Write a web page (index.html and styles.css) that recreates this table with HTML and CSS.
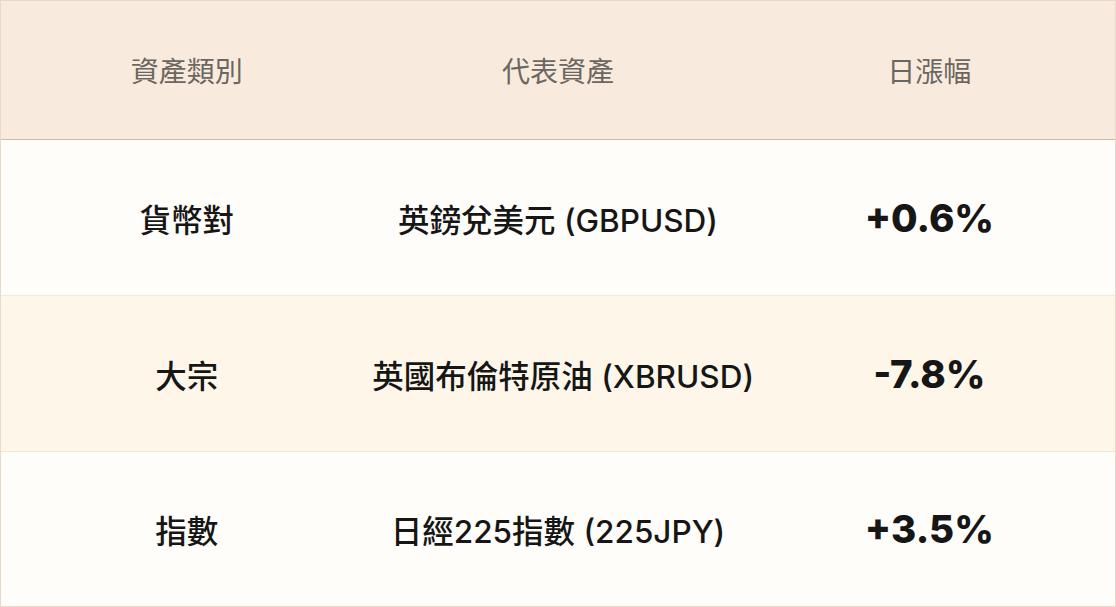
FILE: index.html
```html
<!DOCTYPE html>
<html lang="zh-Hant">
<head>
<meta charset="utf-8">
<link rel="stylesheet" href="styles.css">
</head>
<body>
<div class="table">
  <div class="row head">
    <div class="cell">資產類別</div>
    <div class="cell">代表資產</div>
    <div class="cell">日漲幅</div>
  </div>
  <div class="row r1">
    <div class="cell">貨幣對</div>
    <div class="cell">英鎊兌美元 (GBPUSD)</div>
    <div class="cell pct">+0.6%</div>
  </div>
  <div class="row r2">
    <div class="cell">大宗</div>
    <div class="cell">英國布倫特原油 (XBRUSD)</div>
    <div class="cell pct">-7.8%</div>
  </div>
  <div class="row r3">
    <div class="cell">指數</div>
    <div class="cell">日經225指數 (225JPY)</div>
    <div class="cell pct">+3.5%</div>
  </div>
</div>
</body>
</html>
```
FILE: styles.css
```css
html, body {
  margin: 0;
  padding: 0;
  background: #fffdf9;
}
.table {
  width: 1116px;
  height: 607px;
  box-sizing: border-box;
  border: 1px solid #e9d9c6;
  display: flex;
  flex-direction: column;
  font-family: Inter, "Noto Sans CJK TC", sans-serif;
}
.row {
  display: grid;
  grid-template-columns: repeat(3, minmax(0, 1fr));
  align-items: center;
  text-align: center;
  box-sizing: border-box;
}
.cell {
  white-space: nowrap;
  min-width: 0;
}
.head {
  height: 139px;
  background: #f8ebde;
  border-bottom: 1px solid #cdbcab;
  color: #6c6661;
  font-size: 28px;
  font-weight: 400;
}
.r1, .r2, .r3 {
  color: #161616;
  font-size: 31.5px;
  font-weight: 500;
}
.r1 {
  height: 156px;
  background: #fffdf9;
  border-bottom: 1px solid #f5e6d6;
}
.r2 {
  height: 156px;
  background: #fff6ea;
  border-bottom: 1px solid #f5e6d6;
}
.r3 {
  flex: 1;
  background: #fffdf9;
}
.pct {
  font-size: 38.5px;
  font-weight: 800;
}
```
